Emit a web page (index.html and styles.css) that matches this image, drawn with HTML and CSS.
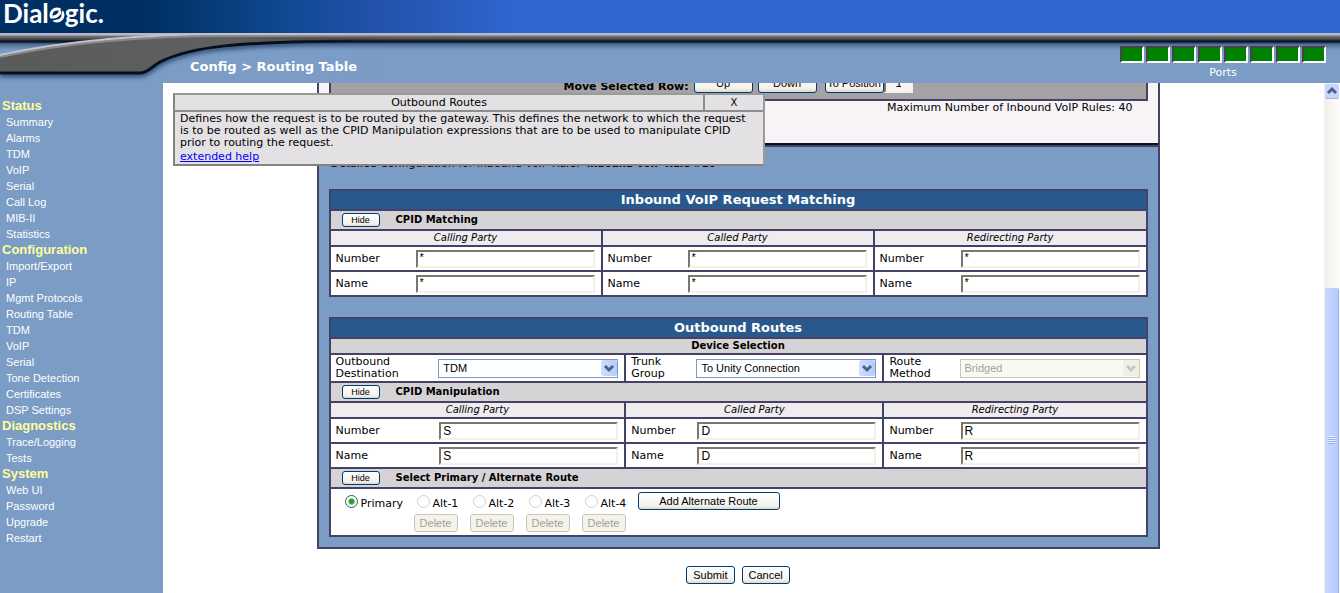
FILE: index.html
```html
<!DOCTYPE html>
<html lang="en">
<head>
    <meta charset="UTF-8">
    <meta name="viewport" content="width=device-width, initial-scale=1.0">
    <title>Dialogic - Routing Table</title>
    <link rel="stylesheet" href="styles.css">
</head>
<body>

    <!-- Header -->
    <header>
        <div class="banner"></div>
        <svg class="swoosh" width="380" height="83" viewBox="0 0 380 83">
            <defs>
                <linearGradient id="metal" x1="0" y1="0" x2="1" y2="0">
                    <stop offset="0" stop-color="#5a5a5a"/>
                    <stop offset="0.6" stop-color="#606060"/>
                    <stop offset="1" stop-color="#484848"/>
                </linearGradient>
                <filter id="soft" x="-5%" y="-20%" width="110%" height="150%">
                    <feGaussianBlur stdDeviation="2"/>
                </filter>
            </defs>
            <path d="M0 55C60 42 130 34 230 34H380V83H0Z" fill="#7b9cc5"/>
            <path d="M0 75H140C147 75 150 70 160 64C190 49 230 43 380 43" fill="none" stroke="#253f66" stroke-width="4" filter="url(#soft)"/>
            <path d="M0 55C60 42 130 34 230 34H380V41C230 41 190 47 160 62C150 67 147 73 140 73H0Z" fill="url(#metal)"/>
            <path d="M0 73H140C147 73 150 68 160 62C190 47 230 41 380 41" fill="none" stroke="#04101f" stroke-width="3"/>
            <path d="M0 57C60 44 130 36 230 36H380" fill="none" stroke="#8a8a8c" stroke-width="2"/>
            <path d="M0 55C60 42 130 34 230 34H380" fill="none" stroke="#c3c3cb" stroke-width="2"/>
        </svg>
        <div class="logo">
            <span>Dial</span>
            <svg width="16" height="26" viewBox="0 0 16 26">
                <circle cx="8" cy="15" r="6" fill="none" stroke="#fff" stroke-width="3"/>
                <path d="M0 19C5 21 11 18 13 9" fill="none" stroke="#003063" stroke-width="2"/>
                <path d="M4 17C8 17 11 14 11 11" fill="none" stroke="#fff" stroke-width="3"/>
            </svg>
            <span>gic.</span>
        </div>
        <h1>Config &gt; Routing Table</h1>
        <div class="ports">
            <div class="port-list">
                <i></i><i></i><i></i><i></i><i></i><i></i><i></i><i></i>
            </div>
            <span>Ports</span>
        </div>
    </header>

    <div class="page">
        <!-- Navigation -->
        <nav>
            <h2>Status</h2>
            <a href="#">Summary</a>
            <a href="#">Alarms</a>
            <a href="#">TDM</a>
            <a href="#">VoIP</a>
            <a href="#">Serial</a>
            <a href="#">Call Log</a>
            <a href="#">MIB-II</a>
            <a href="#">Statistics</a>
            <h2>Configuration</h2>
            <a href="#">Import/Export</a>
            <a href="#">IP</a>
            <a href="#">Mgmt Protocols</a>
            <a href="#">Routing Table</a>
            <a href="#">TDM</a>
            <a href="#">VoIP</a>
            <a href="#">Serial</a>
            <a href="#">Tone Detection</a>
            <a href="#">Certificates</a>
            <a href="#">DSP Settings</a>
            <h2>Diagnostics</h2>
            <a href="#">Trace/Logging</a>
            <a href="#">Tests</a>
            <h2>System</h2>
            <a href="#">Web UI</a>
            <a href="#">Password</a>
            <a href="#">Upgrade</a>
            <a href="#">Restart</a>
        </nav>

        <!-- Main Content Area -->
        <main>
            <form class="content">
                <div class="box">
                    <div class="rules">
                        <div class="move-row">
                            <label for="position">Move Selected Row:</label>
                            <button type="button" class="move">Up</button>
                            <button type="button" class="move">Down</button>
                            <div class="to-position">
                                <button type="button" class="move">To Position</button>
                                <input type="text" id="position" value="1">
                            </div>
                        </div>
                        <p class="maximum">Maximum Number of Inbound VoIP Rules: 40</p>
                    </div>

                    <div class="details">
                        <p class="rule-name">Detailed Configuration for Inbound VoIP Rule: &nbsp;<b>Inbound VoIP Rule #10</b></p>

                        <!-- Inbound matching -->
                        <table class="inbound">
                            <colgroup><col class="third"><col class="third"><col></colgroup>
                            <tr class="title"><th colspan="3">Inbound VoIP Request Matching</th></tr>
                            <tr class="section">
                                <td colspan="3"><div class="section-bar"><button type="button" class="hide">Hide</button><b>CPID Matching</b></div></td>
                            </tr>
                            <tr class="party"><th>Calling Party</th><th>Called Party</th><th>Redirecting Party</th></tr>
                            <tr>
                                <td><div class="field"><label for="in-calling-number">Number</label><input type="text" id="in-calling-number" value="*"></div></td>
                                <td><div class="field"><label for="in-called-number">Number</label><input type="text" id="in-called-number" value="*"></div></td>
                                <td><div class="field"><label for="in-redirect-number">Number</label><input type="text" id="in-redirect-number" value="*"></div></td>
                            </tr>
                            <tr>
                                <td><div class="field"><label for="in-calling-name">Name</label><input type="text" id="in-calling-name" value="*"></div></td>
                                <td><div class="field"><label for="in-called-name">Name</label><input type="text" id="in-called-name" value="*"></div></td>
                                <td><div class="field"><label for="in-redirect-name">Name</label><input type="text" id="in-redirect-name" value="*"></div></td>
                            </tr>
                        </table>

                        <!-- Outbound routes -->
                        <table class="outbound">
                            <colgroup><col class="calling"><col class="called"><col></colgroup>
                            <tr class="title"><th colspan="3">Outbound Routes</th></tr>
                            <tr class="subtitle"><th colspan="3">Device Selection</th></tr>
                            <tr class="device">
                                <td>
                                    <div class="field">
                                        <label for="destination">Outbound<br>Destination</label>
                                        <div class="select">
                                            <select id="destination"><option>TDM</option></select>
                                            <svg width="16" height="16" viewBox="0 0 16 16"><path d="M4 6L8 10L12 6" fill="none" stroke="#4d6185" stroke-width="3"/></svg>
                                        </div>
                                    </div>
                                </td>
                                <td>
                                    <div class="field">
                                        <label for="trunk">Trunk<br>Group</label>
                                        <div class="select">
                                            <select id="trunk"><option>To Unity Connection</option></select>
                                            <svg width="16" height="16" viewBox="0 0 16 16"><path d="M4 6L8 10L12 6" fill="none" stroke="#4d6185" stroke-width="3"/></svg>
                                        </div>
                                    </div>
                                </td>
                                <td>
                                    <div class="field">
                                        <label for="method">Route<br>Method</label>
                                        <div class="select disabled">
                                            <select id="method" disabled><option>Bridged</option></select>
                                            <svg width="16" height="16" viewBox="0 0 16 16"><path d="M4 6L8 10L12 6" fill="none" stroke="#c9c7ba" stroke-width="3"/></svg>
                                        </div>
                                    </div>
                                </td>
                            </tr>
                            <tr class="section">
                                <td colspan="3"><div class="section-bar"><button type="button" class="hide">Hide</button><b>CPID Manipulation</b></div></td>
                            </tr>
                            <tr class="party"><th>Calling Party</th><th>Called Party</th><th>Redirecting Party</th></tr>
                            <tr>
                                <td><div class="field"><label for="out-calling-number">Number</label><input type="text" id="out-calling-number" value="S"></div></td>
                                <td><div class="field"><label for="out-called-number">Number</label><input type="text" id="out-called-number" value="D"></div></td>
                                <td><div class="field"><label for="out-redirect-number">Number</label><input type="text" id="out-redirect-number" value="R"></div></td>
                            </tr>
                            <tr>
                                <td><div class="field"><label for="out-calling-name">Name</label><input type="text" id="out-calling-name" value="S"></div></td>
                                <td><div class="field"><label for="out-called-name">Name</label><input type="text" id="out-called-name" value="D"></div></td>
                                <td><div class="field"><label for="out-redirect-name">Name</label><input type="text" id="out-redirect-name" value="R"></div></td>
                            </tr>
                            <tr class="section">
                                <td colspan="3"><div class="section-bar"><button type="button" class="hide">Hide</button><b>Select Primary / Alternate Route</b></div></td>
                            </tr>
                            <tr>
                                <td colspan="3">
                                    <div class="routes">
                                        <div class="route primary">
                                            <label><input type="radio" name="route" checked><span>Primary</span></label>
                                        </div>
                                        <div class="route">
                                            <label><input type="radio" name="route" disabled><span>Alt-1</span></label>
                                            <button type="button" disabled>Delete</button>
                                        </div>
                                        <div class="route">
                                            <label><input type="radio" name="route" disabled><span>Alt-2</span></label>
                                            <button type="button" disabled>Delete</button>
                                        </div>
                                        <div class="route">
                                            <label><input type="radio" name="route" disabled><span>Alt-3</span></label>
                                            <button type="button" disabled>Delete</button>
                                        </div>
                                        <div class="route">
                                            <label><input type="radio" name="route" disabled><span>Alt-4</span></label>
                                            <button type="button" disabled>Delete</button>
                                        </div>
                                        <button type="button" class="add">Add Alternate Route</button>
                                    </div>
                                </td>
                            </tr>
                        </table>
                    </div>
                </div>

                <div class="actions">
                    <button type="button">Submit</button>
                    <button type="button">Cancel</button>
                </div>
            </form>

            <!-- Help popup -->
            <div class="help">
                <div class="help-title">
                    <span>Outbound Routes</span>
                    <button type="button" class="close">X</button>
                </div>
                <div class="help-text">
                    <p>Defines how the request is to be routed by the gateway. This defines the network to which the request<br>
                    is to be routed as well as the CPID Manipulation expressions that are to be used to manipulate CPID<br>
                    prior to routing the request.</p>
                    <a href="#">extended help</a>
                </div>
            </div>
        </main>

        <!-- Scrollbar -->
        <div class="scrollbar">
            <div class="scroll-up">
                <svg width="14" height="14" viewBox="0 0 14 14"><path d="M3 9L7 5L11 9" fill="none" stroke="#4d6185" stroke-width="3"/></svg>
            </div>
            <div class="thumb"><span class="grip"></span></div>
        </div>
    </div>

</body>
</html>
```
FILE: styles.css
```css
/* Basic Styling */
* {
    box-sizing: border-box;
}

html, body {
    height: 100%;
    margin: 0;
}

body {
    display: flex;
    flex-direction: column;
    overflow: hidden;
    background: #7b9cc5;
    color: #000;
    font-family: "DejaVu Sans", Verdana, sans-serif;
    font-size: 11px;
    line-height: 12px;
}

h1, h2, p {
    margin: 0;
}

/* Header */
header {
    position: relative;
    display: flex;
    flex: none;
    height: 83px;
    color: #fff;
    background: #7b9cc5;
}

.banner {
    position: absolute;
    top: 0;
    left: 0;
    width: 100%;
    height: 50px;
    background:
        linear-gradient(#b8b8cc 0, #b8b8cc 2px, #777 3px, #4c4c4c 6px, #0a1420 8px, #0a1a30 9px, #4e6b94 11px, #7b9cc5 17px) 0 33px / 100% 17px no-repeat,
        linear-gradient(90deg, #003063 0, #003063 150px, #0f4890 280px, #2452ac 380px, #2f66d0 520px);
}

.swoosh {
    position: absolute;
    top: 0;
    left: 0;
    /* blends into the straight bar of the banner */
    mask-image: linear-gradient(90deg, #000 280px, transparent 380px);
}

.logo {
    position: relative;
    display: flex;
    width: 190px;
    height: 32px;
    padding-left: 3px;
    font-family: Lato, sans-serif;
    font-size: 26px;
    font-weight: bold;
    line-height: 26px;
}

header h1 {
    position: relative;
    align-self: flex-end;
    flex: 1;
    padding-bottom: 8px;
    font-size: 13px;
    line-height: 16px;
}

.ports {
    position: relative;
    padding: 46px 14px 0 0;
    text-align: center;
}

.port-list {
    display: flex;
    gap: 2px;
    margin-bottom: 4px;
}

.port-list i {
    width: 24px;
    height: 17px;
    background: #008200;
    border: 2px solid;
    border-color: #444 #fff #fff #444;
}

/* Sidebar */
.page {
    display: flex;
    flex: 1;
    min-height: 0;
}

nav {
    flex: none;
    width: 163px;
    padding-top: 15px;
    font-family: "Liberation Sans", Arial, sans-serif;
    line-height: 16px;
}

nav h2 {
    padding-left: 2px;
    color: #ffff9c;
    font-size: 13px;
    line-height: 16px;
}

nav a {
    display: block;
    padding-left: 6px;
    color: #fff;
    text-decoration: none;
}

/* Main */
main {
    position: relative;
    flex: 1;
    padding-right: 11px;
    overflow: hidden;
    background: #fff;
}

.content {
    max-width: 843px;
    margin: 0 auto;
}

.box {
    border: 2px solid #454268;
    border-top: none;
}

.rules {
    display: flow-root;
    height: 62px;
    padding: 0 10px;
    background: #f7f3f7;
    border-bottom: 2px solid #101018;
}

.move-row {
    display: flex;
    justify-content: center;
    align-items: flex-end;
    gap: 5px;
    height: 30px;
    margin-top: -12px;
    padding-bottom: 6px;
    background: #a5a2a5;
    border: 2px solid #454268;
    border-top: none;
}

.move-row label {
    font-size: 11px;
    font-weight: bold;
}

.to-position {
    display: flex;
    margin-left: 3px;
}

.maximum {
    padding: 1px 15px;
    text-align: right;
}

.details {
    padding: 11px 10px 10px;
    background: #7b9cc5;
    border-top: 2px solid #454268;
}

.rule-name {
    margin-bottom: 19px;
    padding-left: 2px;
}

.rule-name b {
    font-size: 10px;
}

/* Tables */
table {
    width: 100%;
    background: #fff;
    border-collapse: collapse;
    table-layout: fixed;
}

.inbound {
    margin-bottom: 20px;
}

.inbound input[type="text"] {
    padding-bottom: 4px;
    font-size: 11px;
}

.third {
    width: 33.3%;
}

.calling {
    width: 36.2%;
}

.called {
    width: 31.6%;
}

td, th {
    height: 25px;
    padding: 0;
    border: 2px solid #454268;
}

.title th {
    height: 20px;
    color: #fff;
    background: #29598c;
    font-size: 13px;
}

.section td {
    height: 20px;
    background: #d6d3d6;
}

.subtitle th {
    height: 16px;
    background: #d6d3d6;
    font-size: 10px;
}

.party th {
    height: 16px;
    background: #efebef;
    font-size: 10px;
    font-style: italic;
    font-weight: normal;
}

.device td {
    height: 28px;
}

.section-bar {
    display: flex;
    align-items: center;
    gap: 16px;
    padding-left: 11px;
    font-size: 10px;
}

.field {
    display: flex;
    justify-content: space-between;
    align-items: center;
    padding: 0 6px 0 5px;
}

/* Form controls */
input[type="text"] {
    width: 179px;
    height: 18px;
    padding: 0 2px;
    background: #fff;
    border: 2px solid;
    border-color: #7b7869 #f5efe8 #f5efe8 #7b7869;
    border-radius: 0;
    font-family: "Liberation Sans", Arial, sans-serif;
    font-size: 12px;
}

.to-position input[type="text"] {
    width: 29px;
    height: 21px;
    padding: 0 10px;
    background: #f7f3f7;
}

button {
    height: 18px;
    padding: 0 6px;
    background: linear-gradient(#fff, #f3f2ec 80%, #dcd8cc);
    border: 1px solid #003c74;
    border-radius: 3px;
    color: #000;
    font-family: "Liberation Sans", Arial, sans-serif;
    font-size: 11px;
    line-height: 12px;
    white-space: nowrap;
}

button:disabled {
    background: #f5f4ea;
    border-color: #c9c7ba;
    color: #a1a192;
}

.hide {
    width: 38px;
    height: 14px;
    font-size: 9px;
    line-height: 9px;
}

.move {
    width: 59px;
    height: 21px;
    padding: 0;
}

.select {
    position: relative;
}

.select select {
    display: block;
    width: 180px;
    height: 19px;
    padding: 0 4px;
    appearance: none;
    background: #fff;
    border: 1px solid #7b9cbd;
    border-radius: 0;
    color: #000;
    font-family: "Liberation Sans", Arial, sans-serif;
    font-size: 11px;
    opacity: 1;
}

.select svg {
    position: absolute;
    top: 1px;
    right: 1px;
    background: linear-gradient(90deg, #d0deff, #b5cbfa);
    border-radius: 2px;
    pointer-events: none;
}

.disabled select {
    background: #f8f8f4;
    border-color: #c9c7ba;
    color: #a5a294;
}

.disabled svg {
    background: #f0efe6;
}

input[type="radio"] {
    flex: none;
    width: 13px;
    height: 13px;
    margin: 0;
    appearance: none;
    background: #fff;
    border: 1px solid #2a5580;
    border-radius: 50%;
}

input[type="radio"]:checked {
    background: radial-gradient(circle, #21a121 0, #21a121 2px, #fff 4px);
}

input[type="radio"]:disabled {
    border-color: #d2d0c4;
}

.routes {
    display: flex;
    gap: 12px;
    height: 46px;
    padding: 3px 0 0 14px;
}

.route {
    width: 44px;
    padding-top: 3px;
}

.route label {
    display: flex;
    gap: 3px;
    height: 19px;
    padding-left: 3px;
    white-space: nowrap;
}

.route span {
    padding-top: 3px;
}

.route button {
    width: 44px;
    padding: 0;
}

.primary {
    width: 57px;
}

.primary label {
    padding-left: 0;
}

.add {
    width: 142px;
}

.actions {
    display: flex;
    justify-content: center;
    gap: 7px;
    padding-top: 17px;
}

/* Help popup */
.help {
    position: absolute;
    top: 10px;
    left: 10px;
    width: 592px;
    background: #e3e1e3;
    border: 2px solid;
    border-color: #9a9a9a #9a9a9a #848284 #848284;
}

.help-title {
    display: flex;
    height: 17px;
    border-bottom: 2px solid #8e8c8e;
    line-height: 15px;
    text-align: center;
}

.help-title span {
    flex: 1;
}

.help .close {
    width: 60px;
    height: 15px;
    padding: 0;
    background: none;
    border: none;
    border-left: 2px solid #8e8c8e;
    border-radius: 0;
    font-family: "DejaVu Sans", Verdana, sans-serif;
    font-size: 10px;
}

.help-text {
    padding: 1px 5px;
    white-space: nowrap;
}

.help-text a {
    display: block;
    padding-top: 2px;
    color: #00f;
}

/* Scrollbar */
.scrollbar {
    display: flex;
    flex-direction: column;
    justify-content: space-between;
    flex: none;
    width: 16px;
    padding: 1px 1px 0;
    background: linear-gradient(90deg, #f1efe8, #fefdfb);
}

.scroll-up {
    height: 15px;
    background: #c5d5fd;
    border-bottom: 1px solid #9bb4e4;
    border-radius: 2px;
}

.thumb {
    display: flex;
    justify-content: center;
    align-items: center;
    height: 60%;
    background: linear-gradient(90deg, #cad8ff, #b5cbff);
    border-right: 1px solid #98b2e6;
    border-radius: 2px 2px 0 0;
}

.grip {
    width: 7px;
    height: 8px;
    background: repeating-linear-gradient(#eef4fe 0, #eef4fe 1px, #8cb0f8 1px, #8cb0f8 2px);
}
```
